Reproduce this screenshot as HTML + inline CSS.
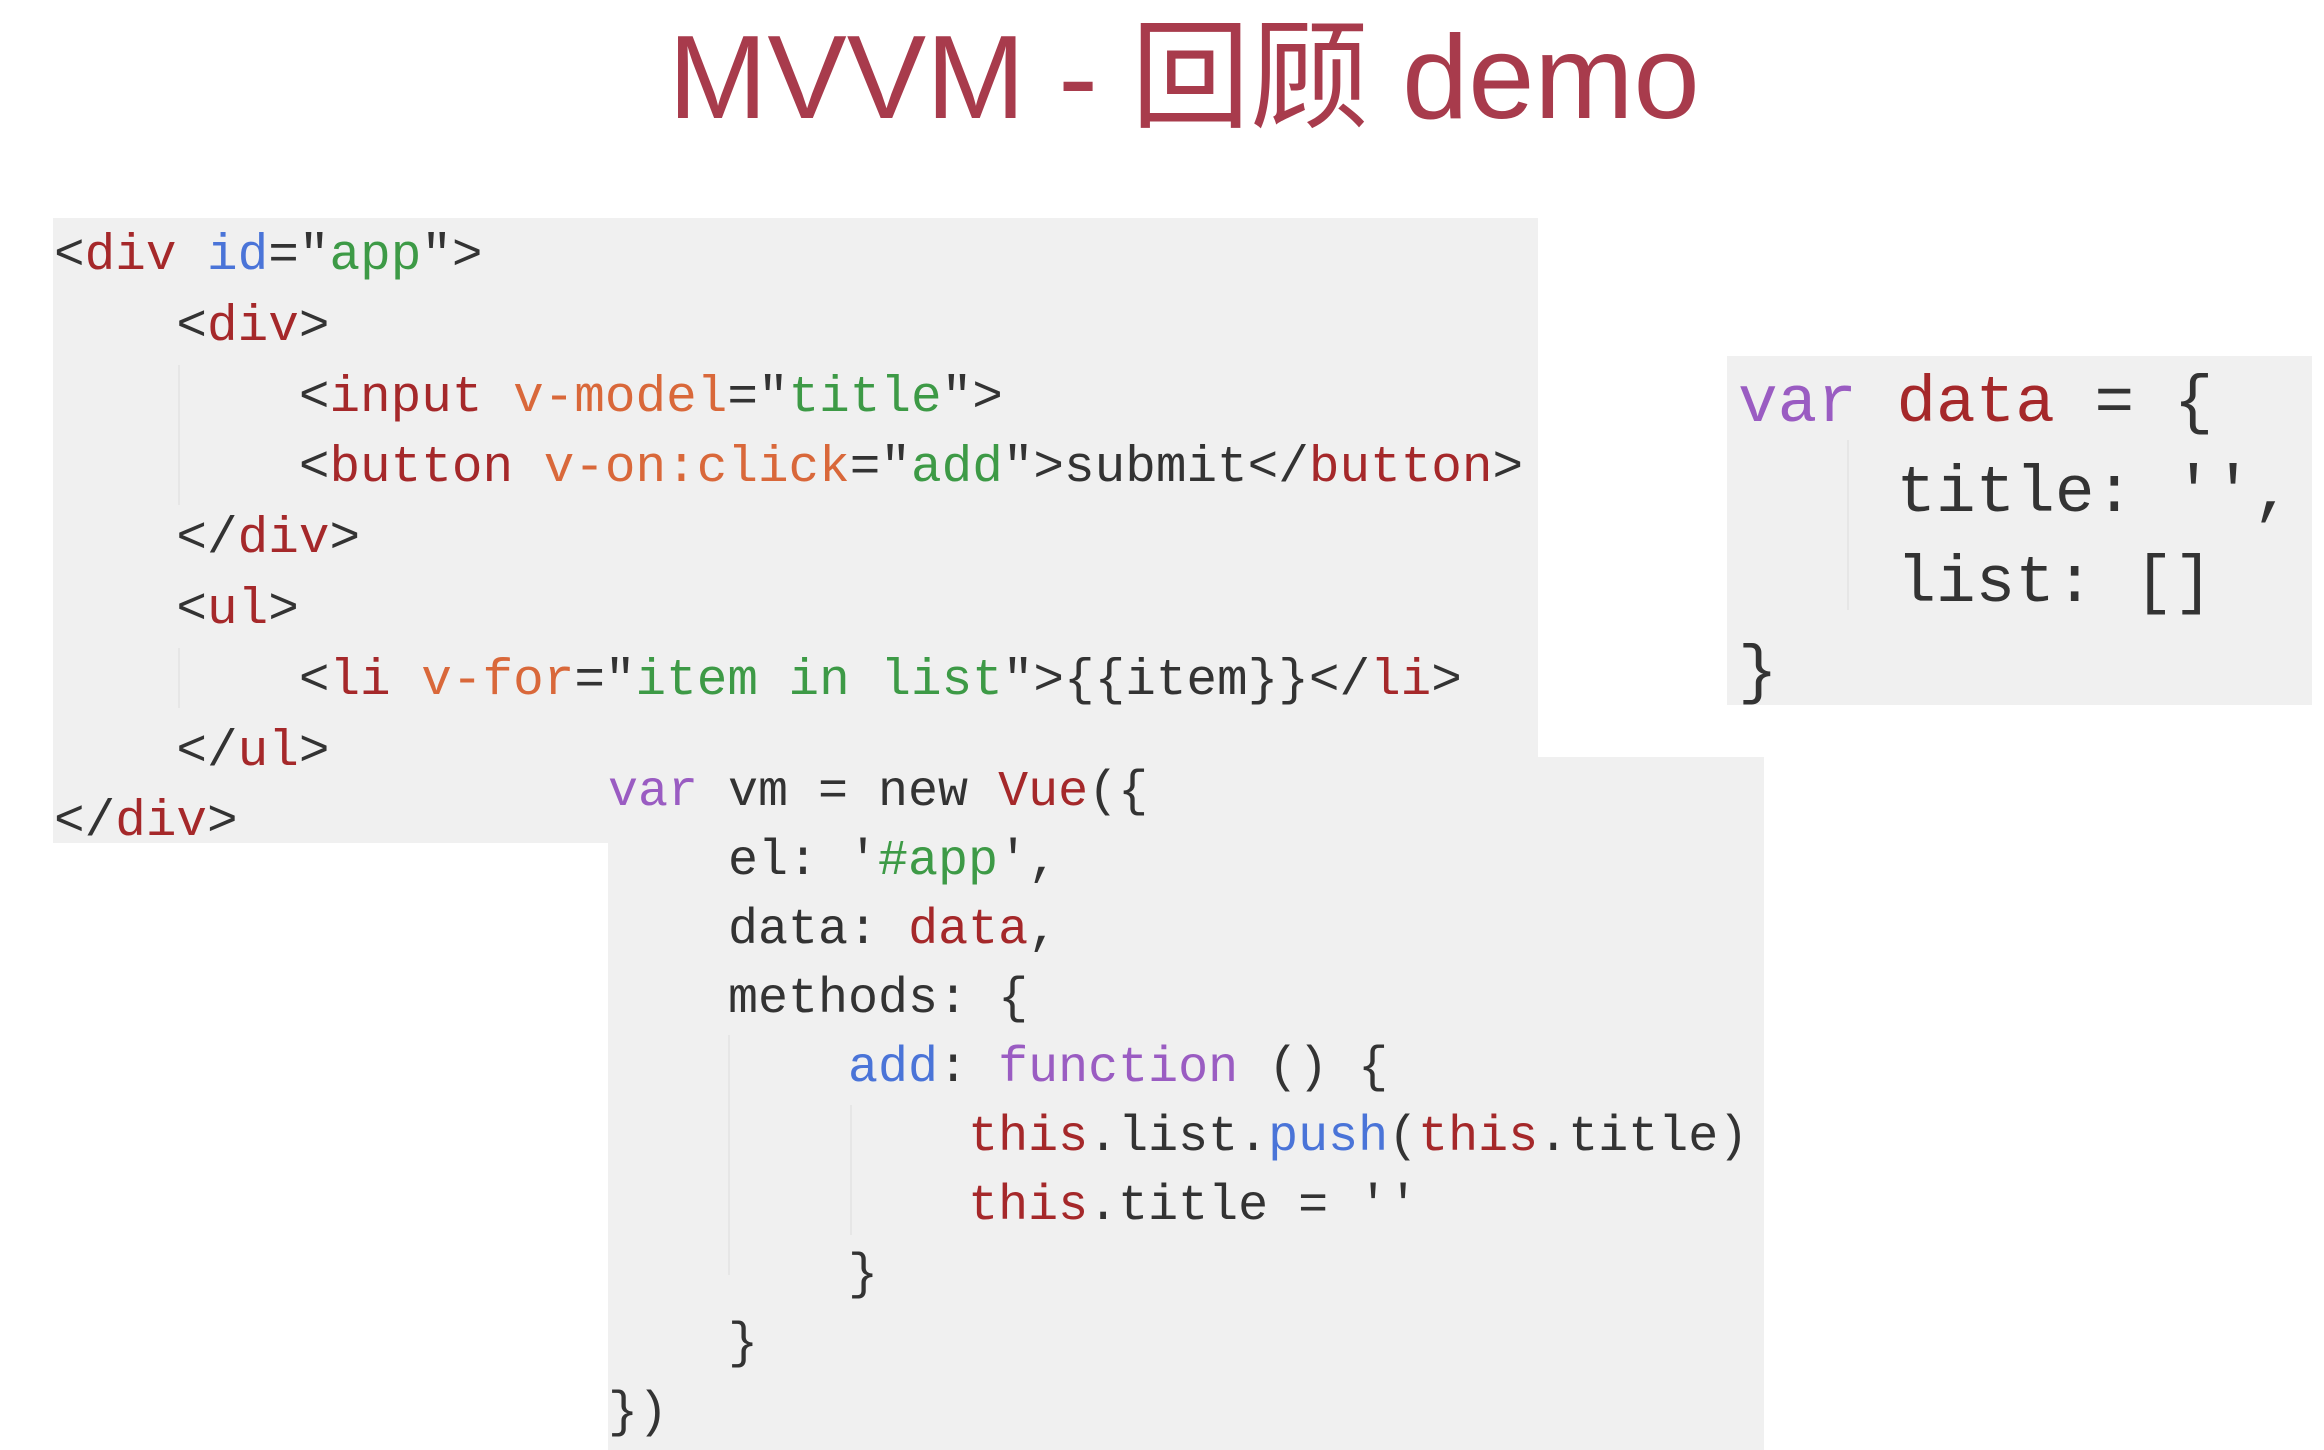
<!DOCTYPE html>
<html><head><meta charset="utf-8"><style>
body{margin:0;width:2324px;height:1450px;background:#fff;position:relative;overflow:hidden}
.t{position:absolute;left:22px;width:2324px;top:-2px;text-align:center;font-family:"Liberation Sans","Noto Sans CJK SC",sans-serif;font-size:119px;color:#a83b4c;line-height:160px}
.box{position:absolute;background:#f0f0f0}
pre{position:absolute;margin:0;font-family:"Liberation Mono",monospace;color:#333}
.r{color:#a5282a}.o{color:#d9683a}.g{color:#3d9a46}.b{color:#4a74d8}.p{color:#9a5cc2}
.guide{position:absolute;width:2px;background:#e6e6e6}
</style></head><body>
<div class="t">MVVM - 回顾 demo</div>
<div class="box" style="left:53px;top:218px;width:1485px;height:625px"></div>
<div class="box" style="left:608px;top:757px;width:1156px;height:693px"></div>
<div class="box" style="left:1727px;top:356px;width:585px;height:349px"></div>
<div class="guide" style="left:178px;top:365px;height:140px"></div>
<div class="guide" style="left:178px;top:648px;height:60px"></div>
<div class="guide" style="left:728px;top:1035px;height:240px"></div>
<div class="guide" style="left:850px;top:1105px;height:130px"></div>
<div class="guide" style="left:1847px;top:440px;height:170px"></div>
<pre style="left:54px;top:222px;font-size:51px;line-height:70.8px">&lt;<span class="r">div</span> <span class="b">id</span>="<span class="g">app</span>"&gt;
    &lt;<span class="r">div</span>&gt;
        &lt;<span class="r">input</span> <span class="o">v-model</span>="<span class="g">title</span>"&gt;
        &lt;<span class="r">button</span> <span class="o">v-on:click</span>="<span class="g">add</span>"&gt;submit&lt;/<span class="r">button</span>&gt;
    &lt;/<span class="r">div</span>&gt;
    &lt;<span class="r">ul</span>&gt;
        &lt;<span class="r">li</span> <span class="o">v-for</span>="<span class="g">item in list</span>"&gt;{{item}}&lt;/<span class="r">li</span>&gt;
    &lt;/<span class="r">ul</span>&gt;
&lt;/<span class="r">div</span>&gt;</pre>
<pre style="left:608px;top:758px;font-size:50px;line-height:69px"><span class="p">var</span> vm = new <span class="r">Vue</span>({
    el: '<span class="g">#app</span>',
    data: <span class="r">data</span>,
    methods: {
        <span class="b">add</span>: <span class="p">function</span> () {
            <span class="r">this</span>.list.<span class="b">push</span>(<span class="r">this</span>.title)
            <span class="r">this</span>.title = ''
        }
    }
})</pre>
<pre style="left:1738px;top:359px;font-size:66px;line-height:90px"><span class="p">var</span> <span class="r">data</span> = {
    title: '',
    list: []
}</pre>
</body></html>
